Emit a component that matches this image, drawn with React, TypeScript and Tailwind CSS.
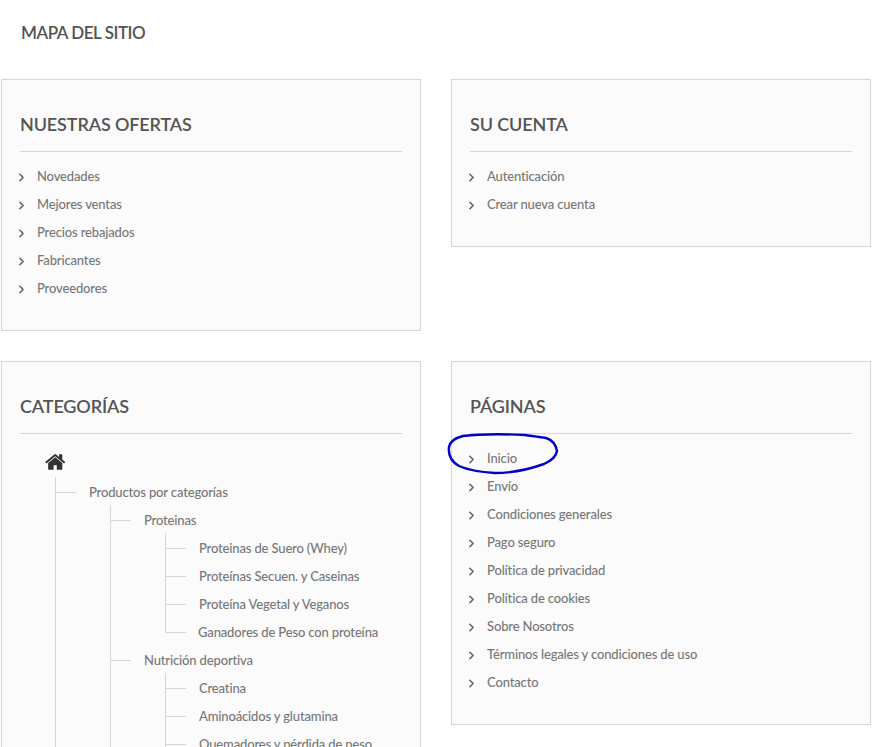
import { ChevronRight } from 'lucide-react';

const OFFERS = ['Novedades', 'Mejores ventas', 'Precios rebajados', 'Fabricantes', 'Proveedores'];
const ACCOUNT = ['Autenticación', 'Crear nueva cuenta'];
const PAGES = [
  'Inicio', 'Envío', 'Condiciones generales', 'Pago seguro', 'Política de privacidad',
  'Política de cookies', 'Sobre Nosotros', 'Términos legales y condiciones de uso', 'Contacto',
];

// more = the list carries on below the fold, so the connector keeps going
interface Node { label: string; more?: boolean; children?: Node[]; }

const TREE: Node[] = [
  {
    label: 'Productos por categorías',
    more: true,
    children: [
      {
        label: 'Proteinas',
        children: [
          { label: 'Proteinas de Suero (Whey)' },
          { label: 'Proteínas Secuen. y Caseinas' },
          { label: 'Proteína Vegetal y Veganos' },
          { label: 'Ganadores de Peso con proteína' },
        ],
      },
      {
        label: 'Nutrición deportiva',
        more: true,
        children: [
          { label: 'Creatina' },
          { label: 'Aminoácidos y glutamina' },
          { label: 'Quemadores y pérdida de peso', more: true },
        ],
      },
    ],
  },
];

function Card({ title, className, children }: { title: string; className: string; children: React.ReactNode }) {
  return (
    <section className={`w-[420px] border border-[#d6d4d4] bg-[#fbfbfb] px-[18px] ${className}`}>
      <h3 className="h-[72px] border-b border-[#d6d4d4] pt-[32px] text-[18px] leading-[24px] font-semibold tracking-[-0.13px] text-[#555454] uppercase">{title}</h3>
      {children}
    </section>
  );
}

function LinkList({ items }: { items: string[] }) {
  return (
    <ul className="pt-[11px]">
      {items.map((item) => (
        <li key={item} className="flex h-[28px] items-center text-[13px] font-medium tracking-[-0.15px] text-[#777777]">
          <ChevronRight className="mr-[9px] -ml-[5px] shrink-0 text-[#666666]" size={13} strokeWidth={3} />
          {item}
        </li>
      ))}
    </ul>
  );
}

function Tree({ nodes }: { nodes: Node[] }) {
  return (
    <ul>
      {nodes.map((node, i) => {
        const last = i === nodes.length - 1 && !node.more;
        return (
          <li key={node.label} className="relative">
            {/* connectors */}
            <span className={`absolute left-0 w-px bg-[#d6d4d4] ${i === 0 ? '-top-[2px]' : 'top-0'} ${last ? 'h-[14px]' : 'bottom-0'}`} />
            <span className="absolute top-[13px] left-0 h-px w-[21px] bg-[#d6d4d4]" />
            <div className={`flex h-[28px] items-center text-[13px] font-medium tracking-[-0.15px] text-[#777777] ${node.label.startsWith('Ganadores') ? 'pl-[33px]' : 'pl-[34px]'}`}>
              {node.label}
            </div>
            {node.children && (
              <div className="pl-[55px]">
                <Tree nodes={node.children} />
              </div>
            )}
          </li>
        );
      })}
    </ul>
  );
}

export default function App() {
  return (
    <div className="relative h-[747px] overflow-hidden bg-white font-['Lato','Liberation_Sans',sans-serif]">
      <h1 className="h-[79px] pt-[21px] pl-[21px] text-[17px] leading-[24px] font-semibold tracking-[-0.45px] text-[#555454] uppercase">Mapa del sitio</h1>
      <div className="flex gap-[30px] pl-px">
        <div className="flex flex-col gap-[30px]">
          <Card title="Nuestras ofertas" className="h-[252px]">
            <LinkList items={OFFERS} />
          </Card>
          <Card title="Categorías" className="h-[600px]">
            <div className="h-[45px] pt-[17px] pl-[25px]">
              <svg width="22" height="22" viewBox="0 0 1792 1792" fill="#333333">
                <path d="M1408 992v480q0 26-19 45t-45 19h-384v-384h-256v384h-384q-26 0-45-19t-19-45v-480q0-1 .5-3t.5-3l575-474 575 474q1 2 1 6zm223-69l-62 74q-8 9-21 11h-3q-13 0-21-7l-692-577-692 577q-12 8-24 7-13-2-21-11l-62-74q-8-10-7-23.500t11-21.500l719-599q32-26 76-26t76 26l244 204v-195q0-14 9-23t23-9h192q14 0 23 9t9 23v408l219 182q10 8 11 21.500t-7 23.500z" />
              </svg>
            </div>
            <div className="pl-[35px]">
              <Tree nodes={TREE} />
            </div>
          </Card>
        </div>
        <div className="flex flex-col gap-[114px]">
          <Card title="Su cuenta" className="h-[168px]">
            <LinkList items={ACCOUNT} />
          </Card>
          <Card title="Páginas" className="h-[364px]">
            <LinkList items={PAGES} />
          </Card>
        </div>
      </div>
      {/* hand-drawn circle around Inicio */}
      <svg className="absolute top-0 left-0" width="891" height="747" fill="none">
        <path
          d="M449 447C450 441 455 438 463 436C480 434 505 434 525 435C532 436 540 437 546 438C552 440 556 445 557 451C556 457 551 461 544 464C530 469 512 473 495 473C480 472 468 470 459 466C452 462 448 455 449 447Z"
          stroke="#0000c8" strokeWidth="2.4"
        />
      </svg>
    </div>
  );
}
